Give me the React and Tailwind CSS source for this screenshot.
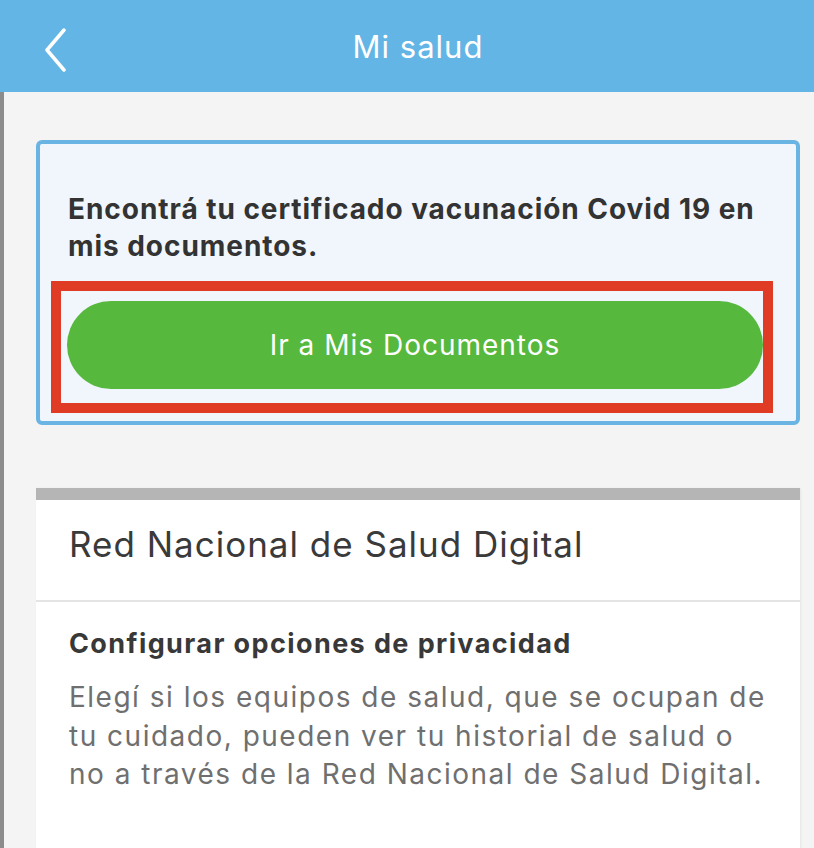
export default function App() {
  return (
    <div className="w-[814px] h-[848px] overflow-hidden bg-[#f4f4f4] flex flex-col font-['Inter',sans-serif]">
      <header className="relative h-[92px] shrink-0 bg-[#63b5e5] flex items-center justify-center pl-[22px]">
        <button className="absolute left-[40px] top-[24px] p-[2px]">
          <svg width="28" height="46" viewBox="0 0 28 46" fill="none">
            <path d="M22 4 L5 24 L22 44" stroke="white" strokeWidth="3.5" strokeLinecap="round" strokeLinejoin="round" />
          </svg>
        </button>
        <h1 className="text-white text-[31px] leading-none tracking-[1px]">Mi salud</h1>
      </header>

      <div className="flex flex-1 min-h-0">
        <div className="w-[4px] bg-[#8c8c8c]" />
        <main className="flex-1 pl-[32px] pr-[14px] pt-[48px]">
          <section className="border-[4px] border-[#6ab4e4] rounded-[6px] bg-[#f0f6fc] pt-[47px] pb-[8px]">
            <p className="px-[28px] text-[28px] leading-[37px] font-bold text-[#333] tracking-[0.95px]">
              Encontrá tu certificado vacunación Covid 19 en mis documentos.
            </p>
            <div className="mt-[16px] ml-[11px] mr-[23px] border-[10px] border-[#e03b24] pt-[10px] pl-[6px] pb-[14px] flex">
              <button className="flex-1 h-[88px] rounded-full bg-[#56b83c] text-white text-[28px] tracking-[1px]">
                Ir a Mis Documentos
              </button>
            </div>
          </section>

          <section className="mt-[63px] bg-white border-t-[12px] border-[#b5b5b5] h-[400px] shadow-[1px_0_2px_rgba(0,0,0,0.06)]">
            <div className="pl-[33px] pt-[24px] pb-[36px] border-b-2 border-[#e4e4e4]">
              <h2 className="text-[35px] leading-[40px] text-[#3a3a3a] tracking-[1px]">Red Nacional de Salud Digital</h2>
            </div>
            <div className="pl-[33px] pr-[30px] pt-[26px]">
              <h3 className="text-[27px] leading-[32px] font-bold text-[#383838] tracking-[1.4px]">
                Configurar opciones de privacidad
              </h3>
              <p className="mt-[18px] text-[28px] leading-[38.5px] text-[#6f6f6f] tracking-[1.5px]">
                Elegí si los equipos de salud, que se ocupan de tu cuidado, pueden ver tu historial de salud o no a través de la Red Nacional de Salud Digital.
              </p>
            </div>
          </section>
        </main>
      </div>
    </div>
  );
}
